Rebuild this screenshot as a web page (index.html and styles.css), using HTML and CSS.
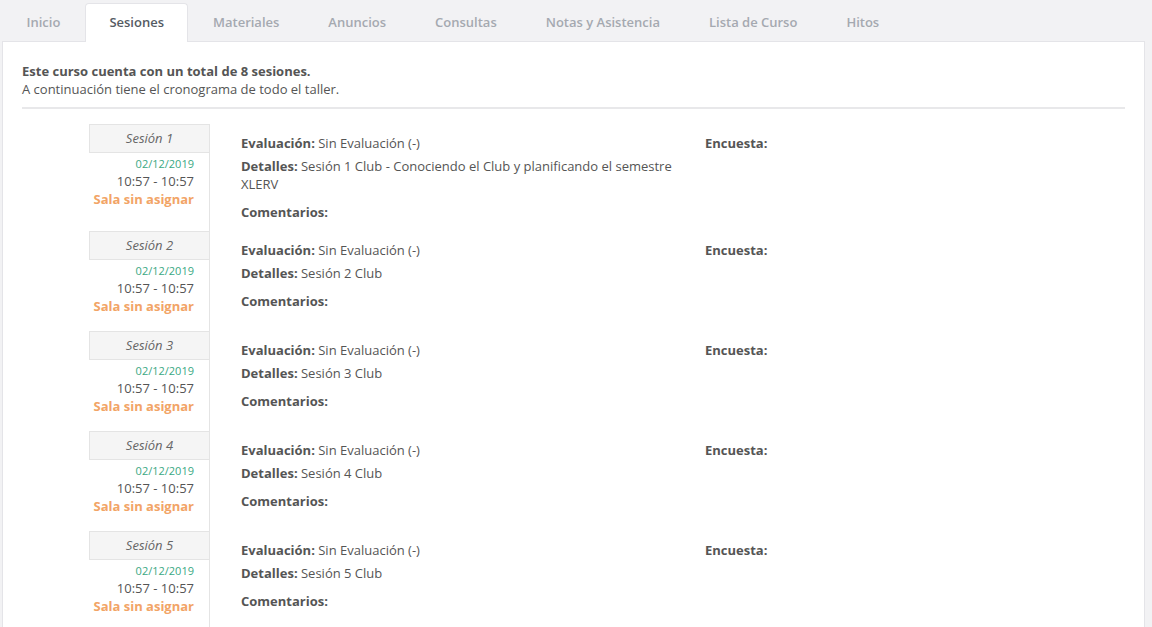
FILE: index.html
```html
<!DOCTYPE html>
<html lang="es">
<head>
<meta charset="utf-8">
<title>Sesiones</title>
<link rel="stylesheet" href="styles.css">
</head>
<body>
<div class="page">
  <nav class="tabs">
    <a class="tab">Inicio</a>
    <a class="tab active">Sesiones</a>
    <a class="tab">Materiales</a>
    <a class="tab">Anuncios</a>
    <a class="tab">Consultas</a>
    <a class="tab">Notas y Asistencia</a>
    <a class="tab">Lista de Curso</a>
    <a class="tab">Hitos</a>
  </nav>
  <main class="panel">
    <div class="intro">
      <p class="intro-title">Este curso cuenta con un total de 8 sesiones.</p>
      <p>A continuación tiene el cronograma de todo el taller.</p>
    </div>
    <div class="sessions">
      <div class="session">
        <div class="s-left">
          <div class="s-head">Sesión 1</div>
          <div class="s-body">
            <div class="s-date">02/12/2019</div>
            <div class="s-time">10:57 - 10:57</div>
            <div class="s-room">Sala sin asignar</div>
          </div>
        </div>
        <div class="s-right">
          <div class="s-info">
            <p class="line"><b>Evaluación:</b> Sin Evaluación (-)</p>
            <p class="line"><b>Detalles:</b> Sesión 1 Club - Conociendo el Club y planificando el semestre XLERV</p>
            <p class="line comments"><b>Comentarios:</b></p>
          </div>
          <div class="s-survey"><b>Encuesta:</b></div>
        </div>
      </div>
      <div class="session">
        <div class="s-left">
          <div class="s-head">Sesión 2</div>
          <div class="s-body">
            <div class="s-date">02/12/2019</div>
            <div class="s-time">10:57 - 10:57</div>
            <div class="s-room">Sala sin asignar</div>
          </div>
        </div>
        <div class="s-right">
          <div class="s-info">
            <p class="line"><b>Evaluación:</b> Sin Evaluación (-)</p>
            <p class="line"><b>Detalles:</b> Sesión 2 Club</p>
            <p class="line comments"><b>Comentarios:</b></p>
          </div>
          <div class="s-survey"><b>Encuesta:</b></div>
        </div>
      </div>
      <div class="session">
        <div class="s-left">
          <div class="s-head">Sesión 3</div>
          <div class="s-body">
            <div class="s-date">02/12/2019</div>
            <div class="s-time">10:57 - 10:57</div>
            <div class="s-room">Sala sin asignar</div>
          </div>
        </div>
        <div class="s-right">
          <div class="s-info">
            <p class="line"><b>Evaluación:</b> Sin Evaluación (-)</p>
            <p class="line"><b>Detalles:</b> Sesión 3 Club</p>
            <p class="line comments"><b>Comentarios:</b></p>
          </div>
          <div class="s-survey"><b>Encuesta:</b></div>
        </div>
      </div>
      <div class="session">
        <div class="s-left">
          <div class="s-head">Sesión 4</div>
          <div class="s-body">
            <div class="s-date">02/12/2019</div>
            <div class="s-time">10:57 - 10:57</div>
            <div class="s-room">Sala sin asignar</div>
          </div>
        </div>
        <div class="s-right">
          <div class="s-info">
            <p class="line"><b>Evaluación:</b> Sin Evaluación (-)</p>
            <p class="line"><b>Detalles:</b> Sesión 4 Club</p>
            <p class="line comments"><b>Comentarios:</b></p>
          </div>
          <div class="s-survey"><b>Encuesta:</b></div>
        </div>
      </div>
      <div class="session">
        <div class="s-left">
          <div class="s-head">Sesión 5</div>
          <div class="s-body">
            <div class="s-date">02/12/2019</div>
            <div class="s-time">10:57 - 10:57</div>
            <div class="s-room">Sala sin asignar</div>
          </div>
        </div>
        <div class="s-right">
          <div class="s-info">
            <p class="line"><b>Evaluación:</b> Sin Evaluación (-)</p>
            <p class="line"><b>Detalles:</b> Sesión 5 Club</p>
            <p class="line comments"><b>Comentarios:</b></p>
          </div>
          <div class="s-survey"><b>Encuesta:</b></div>
        </div>
      </div>
    </div>
  </main>
</div>
</body>
</html>
```
FILE: styles.css
```css
html, body {
  margin: 0;
  padding: 0;
  height: 100%;
  overflow: hidden;
}
body {
  background: #f2f2f4;
  font-family: "Open Sans", "Liberation Sans", sans-serif;
  font-size: 13px;
  line-height: 18px;
  color: #555;
}
.page {
  padding-left: 2px;
  width: 1143px;
}
.tabs {
  display: flex;
  align-items: flex-end;
  height: 41px;
}
.tab {
  display: flex;
  align-items: center;
  height: 38px;
  padding: 0 23.5px 2px 23.5px;
  box-sizing: border-box;
  font-weight: 600;
  color: #a5a9b0;
  border: 1px solid transparent;
  border-bottom: none;
  border-radius: 4px 4px 0 0;
  position: relative;
}
.tab.active {
  background: #fff;
  color: #555b63;
  border-color: #e4e4e8;
  height: 39px;
  margin-bottom: -1px;
  z-index: 1;
}
.panel {
  background: #fff;
  border: 1px solid #e4e4e8;
  border-bottom: none;
  min-height: 600px;
  padding: 20px 19px 0 19px;
}
.intro {
  padding-bottom: 9px;
  border-bottom: 2px solid #e8e8ea;
}
.intro p {
  margin: 0;
}
.intro-title {
  font-weight: 700;
}
.sessions {
  padding: 15px 0 0 67px;
}
.session {
  display: flex;
  align-items: stretch;
}
.s-left {
  width: 120px;
  flex: none;
  border-right: 1px solid #e4e4e4;
}
.s-head {
  height: 27px;
  line-height: 27px;
  background: #f5f5f5;
  border: 1px solid #e4e4e4;
  border-right: none;
  text-align: center;
  font-style: italic;
  color: #666;
}
.s-body {
  text-align: right;
  padding: 2px 15px 16px 0;
}
.s-date {
  font-size: 11px;
  line-height: 17px;
  color: #3aa883;
}
.s-time {
  color: #555;
}
.s-room {
  font-weight: 700;
  color: #f2a466;
}
.s-right {
  display: flex;
  padding: 10px 0 10px 31px;
}
.s-info {
  width: 450px;
}
.line {
  margin: 0 0 5px 0;
}
.line.comments {
  margin: 10px 0 0 0;
}
.s-survey {
  padding-left: 14px;
}
b {
  font-weight: 700;
  color: #555;
}
```
